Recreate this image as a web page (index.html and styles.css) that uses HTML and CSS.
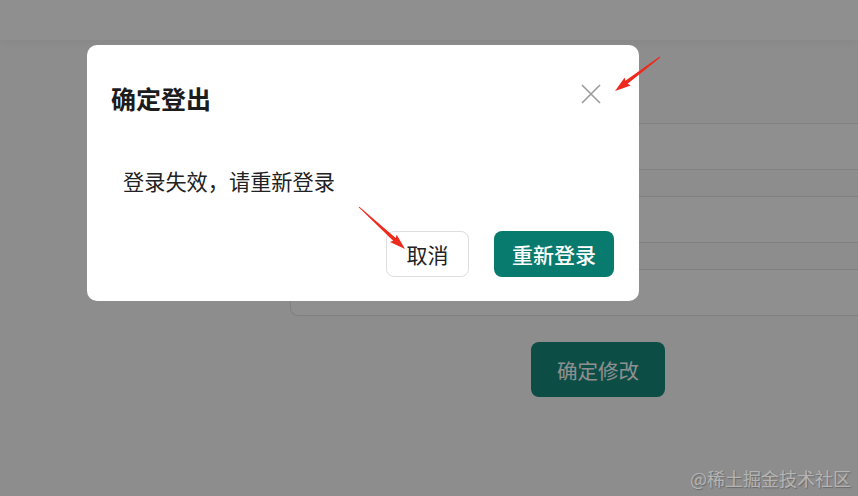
FILE: index.html
```html
<!DOCTYPE html>
<html lang="zh-CN">
<head>
<meta charset="utf-8">
<title>确定登出</title>
<link rel="stylesheet" href="styles.css">
</head>
<body>
<div class="page">
  <header class="topbar"></header>
  <main class="content">
    <form class="form">
      <div class="field"></div>
      <div class="field"></div>
      <div class="field"></div>
      <div class="actions">
        <button type="button" class="btn-submit">确定修改</button>
      </div>
    </form>
  </main>
</div>

<div class="mask"></div>

<div class="dialog" role="dialog">
  <div class="dialog-header">
    <h2 class="dialog-title">确定登出</h2>
    <button type="button" class="dialog-close" aria-label="关闭">
      <svg width="20" height="20" viewBox="0 0 20 20"><path d="M1 1 L19 19 M19 1 L1 19" stroke="#9a9a9a" stroke-width="1.6" fill="none"/></svg>
    </button>
  </div>
  <div class="dialog-body">登录失效，请重新登录</div>
  <div class="dialog-footer">
    <button type="button" class="btn btn-default">取消</button>
    <button type="button" class="btn btn-primary">重新登录</button>
  </div>
</div>

<svg class="annot" width="858" height="496" viewBox="0 0 858 496">
  <g transform="translate(660 57) rotate(142.9)" fill="#ee2a1d">
    <polygon points="0,-0.5 42,-1.9 40.5,-5 56.4,0 40.5,5 42,1.9 0,0.5"/>
  </g>
  <g transform="translate(359 207) rotate(42.4)" fill="#ee2a1d">
    <polygon points="0,-0.5 48,-1.9 46.5,-5 62.3,0 46.5,5 48,1.9 0,0.5"/>
  </g>
</svg>

<div class="watermark">@稀土掘金技术社区</div>
</body>
</html>
```
FILE: styles.css
```css
html, body {
  margin: 0;
  padding: 0;
  width: 858px;
  height: 496px;
  overflow: hidden;
  font-family: "Noto Sans CJK SC", "Noto Sans", sans-serif;
}

.page {
  width: 858px;
  height: 496px;
  background: #fbfbfb;
}

.topbar {
  height: 40px;
  background: #ffffff;
  box-shadow: 0 3px 8px rgba(0, 0, 0, 0.04);
}

.content {
  padding: 83px 0 0 290px;
}

.form {
  display: flex;
  flex-direction: column;
  gap: 26px;
  width: 568px;
}

.field {
  height: 45px;
  border: 1px solid #e4e4e4;
  border-right: none;
  border-radius: 8px 0 0 8px;
  background: #ffffff;
}

.actions {
  padding-left: 241px;
}

.btn-submit {
  width: 134px;
  height: 55px;
  border: none;
  border-radius: 8px;
  background: #168a7e;
  color: #ffffff;
  font-family: inherit;
  font-size: 20.5px;
}

.mask {
  position: absolute;
  inset: 0;
  background: rgba(0, 0, 0, 0.44);
}

.dialog {
  position: absolute;
  left: 87px;
  top: 45px;
  width: 552px;
  height: 256px;
  background: #ffffff;
  border-radius: 10px;
  box-sizing: border-box;
  display: flex;
  flex-direction: column;
}

.dialog-header {
  display: flex;
  justify-content: space-between;
  align-items: flex-start;
  padding: 37px 38px 0 24px;
}

.dialog-title {
  margin: 0;
  font-size: 25px;
  line-height: 32px;
  font-weight: 700;
  color: #1c1c1c;
}

.dialog-close {
  margin-top: 2px;
  padding: 0;
  border: none;
  background: none;
  width: 20px;
  height: 20px;
  display: flex;
}

.dialog-body {
  margin-top: 52px;
  padding-left: 36px;
  font-size: 21.2px;
  line-height: 30px;
  color: #222222;
}

.dialog-footer {
  display: flex;
  justify-content: flex-end;
  gap: 25px;
  margin-top: 35px;
  padding-right: 25px;
}

.btn {
  height: 46px;
  border-radius: 8px;
  font-family: inherit;
  font-size: 21px;
  padding: 0;
}

.btn-default {
  width: 83px;
  border: 1px solid #dedede;
  background: #ffffff;
  color: #222222;
}

.btn-primary {
  width: 120px;
  border: none;
  background: #097a6e;
  color: #ffffff;
  font-weight: 500;
}

.annot {
  position: absolute;
  left: 0;
  top: 0;
  pointer-events: none;
}

.watermark {
  position: absolute;
  right: 7px;
  bottom: 6px;
  font-size: 18px;
  line-height: 24px;
  color: #b4b4b4;
  text-shadow: 1px 1px 1px rgba(0, 0, 0, 0.25);
}
```
